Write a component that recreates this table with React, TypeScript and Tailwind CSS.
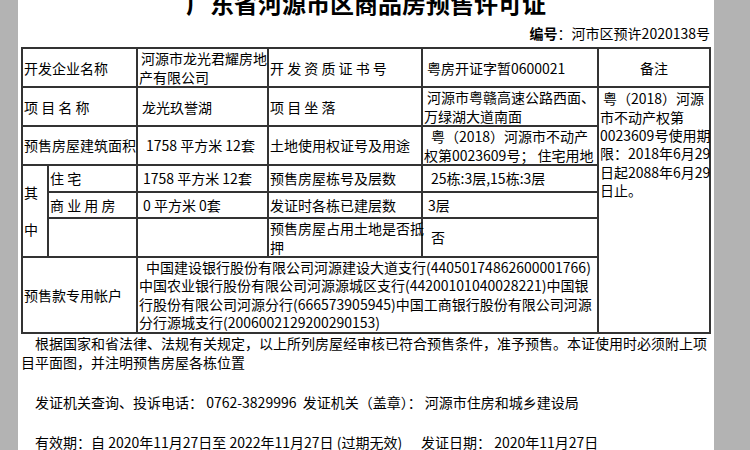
const font = { fontFamily: '"Noto Sans CJK SC", "Noto Sans", sans-serif' }

const td = 'border border-[#333] px-px py-0 align-middle text-left whitespace-pre'

export default function App() {
  return (
    <div className="flex h-[450px] w-[750px] overflow-hidden bg-[#b3b3b3] text-black" style={font}>
      <div className="ml-[18px] w-[696px] bg-white text-[14px] leading-[18.4px]">
        <div className="-mt-[13px] h-[32px] text-center text-[24px] font-bold leading-[32px]">
          广东省河源市区商品房预售许可证
        </div>
        <div className="mt-[5px] pr-[4px] text-right">
          <span className="font-bold">编号</span>：河市区预许2020138号
        </div>

        <table className="ml-[3px] mt-[5px] w-[690px] table-fixed border-separate border-spacing-0 border border-[#333]">
          <colgroup>
            <col className="w-[26px]" />
            <col className="w-[89px]" />
            <col className="w-[131px]" />
            <col className="w-[154px]" />
            <col className="w-[176px]" />
            <col className="w-[112px]" />
          </colgroup>
          <tbody>
            <tr className="h-[38px]">
              <td colSpan={2} className={td}>开发企业名称</td>
              <td className={td}>
                <span className="pl-[2px]">河源市龙光君耀房地</span>
                <br />产有限公司
              </td>
              <td className={td}>开 发 资 质 证 书 号</td>
              <td className={td}><span className="pl-[3px]">粤房开证字暂0600021</span></td>
              <td className={td + ' !text-center'}>备注</td>
            </tr>
            <tr className="h-[39px]">
              <td colSpan={2} className={td}>项 目 名 称</td>
              <td className={td}><span className="pl-[3px]">龙光玖誉湖</span></td>
              <td className={td}>项 目 坐 落</td>
              <td className={td}>
                <span className="pl-[3px]">河源市粤赣高速公路西面、</span>
                <br />万绿湖大道南面
              </td>
              <td rowSpan={6} className={td + ' !align-top pt-px'}>
                <span className="pl-[3px]">粤（2018）河源</span>
                <br />市不动产权第
                <br />0023609号使用期
                <br />限：2018年6月29
                <br />日起2088年6月29
                <br />日止。
              </td>
            </tr>
            <tr className="h-[38px]">
              <td colSpan={2} className={td}>预售房屋建筑面积</td>
              <td className={td}><span className="pl-[7px]">1758 平方米 12套</span></td>
              <td className={td}>土地使用权证号及用途</td>
              <td className={td}>
                <span className="pl-[7px]">粤（2018）河源市不动产</span>
                <br />权第0023609号； 住宅用地
              </td>
            </tr>
            <tr className="h-[27px]">
              <td rowSpan={3} className={td}>
                其<br /><br />中
              </td>
              <td className={td}>住 宅</td>
              <td className={td}><span className="pl-[4px]">1758 平方米 12套</span></td>
              <td className={td}>预售房屋栋号及层数</td>
              <td className={td}><span className="pl-[7px]">25栋:3层,15栋:3层</span></td>
            </tr>
            <tr className="h-[26px]">
              <td className={td}>商 业 用 房</td>
              <td className={td}><span className="pl-[4px]">0 平方米 0套</span></td>
              <td className={td}>发证时各栋已建层数</td>
              <td className={td}><span className="pl-[4px]">3层</span></td>
            </tr>
            <tr className="h-[39px]">
              <td className={td}></td>
              <td className={td}></td>
              <td className={td}>
                预售房屋占用土地是否抵
                <br />押
              </td>
              <td className={td}><span className="pl-[7px]">否</span></td>
            </tr>
            <tr className="h-[75px]">
              <td colSpan={2} className={td}>预售款专用帐户</td>
              <td colSpan={3} className={td}>
                <span className="pl-[7px]">中国建设银行股份有限公司河源建设大道支行(44050174862600001766)</span>
                <br />中国农业银行股份有限公司河源源城区支行(44200101040028221)中国银
                <br />行股份有限公司河源分行(666573905945)中国工商银行股份有限公司河源
                <br />分行源城支行(2006002129200290153)
              </td>
            </tr>
          </tbody>
        </table>

        <div className="ml-[3px] whitespace-pre leading-[19px]">
          <div className="pl-[14px]">根据国家和省法律、法规有关规定，以上所列房屋经审核已符合预售条件，准予预售。本证使用时必须附上项</div>
          <div>目平面图，并注明预售房屋各栋位置</div>
          <div className="mt-[21px] pl-[14px]">发证机关查询、投诉电话： 0762-3829996  发证机关（盖章）： 河源市住房和城乡建设局</div>
          <div className="mt-[21px] pl-[14px]">有效期：自 2020年11月27日至 2022年11月27日 (过期无效)      发证日期： 2020年11月27日</div>
        </div>
      </div>
    </div>
  )
}
